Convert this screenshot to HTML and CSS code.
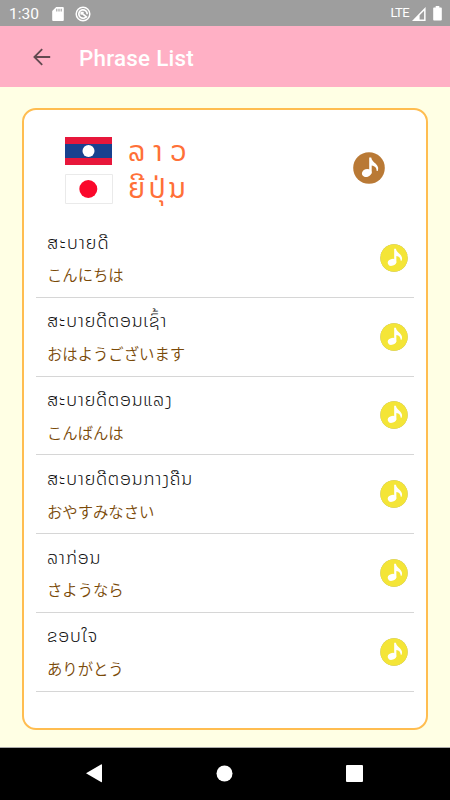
FILE: index.html
```
<!DOCTYPE html>
<html lang="lo">
<head>
<meta charset="utf-8">
<title>Phrase List</title>
<link rel="stylesheet" href="styles.css">
</head>
<body>
<svg class="defs" width="0" height="0" aria-hidden="true">
  <symbol id="note" viewBox="0 0 32 32">
    <ellipse cx="13.7" cy="21" rx="4.9" ry="3.9" transform="rotate(-18 13.7 21)"/>
    <path d="M16.2 5.4h2c.5 3.2 2.4 4.1 4.6 6.4 2.6 2.7 2.9 4.6 1.9 7.2h-1c-.2-3.2-1.5-4.7-5-5.4v7.8h-2.5z"/>
  </symbol>
</svg>
<div class="screen">
  <header class="status">
    <span class="time">1:30</span>
    <svg class="sd" width="12" height="14" viewBox="0 0 12 14"><path fill="#fff" d="M4.2 0H10.8Q11.8 0 11.8 1V13Q11.8 14 10.8 14H1.2Q.2 14 .2 13V4z"/><path stroke="#9e9e9e" stroke-width="1.1" d="M4.8 1.8v2.6M7 1.8v2.6M9.2 1.8v2.6"/></svg>
    <svg class="ring" width="16" height="16" viewBox="0 0 16 16" fill="none" stroke="#fff"><circle cx="8" cy="8" r="6.8" stroke-width="1.5"/><path stroke-width="1.7" d="M10.8 11.2A4.2 4.2 0 1 1 12.2 8.3M6 6.5l6 4.8"/><path stroke-width="1.4" d="M6.2 8.8V6.5h2.5"/></svg>
    <span class="lte">LTE</span>
    <svg class="signal" width="14" height="14" viewBox="0 0 14 14"><path fill="#fff" fill-rule="evenodd" d="M0 14L13.6 0V14zM7.6 8.3V12.5H12.1V3.8z"/></svg>
    <svg class="battery" width="9" height="15" viewBox="0 0 9 15"><path fill="#fff" d="M2.7 0h3.6v1.4H8Q8.8 1.4 8.8 2.2V13.8Q8.8 14.6 8 14.6H1Q.2 14.6 .2 13.8V2.2Q.2 1.4 1 1.4h1.7z"/></svg>
  </header>
  <nav class="appbar">
    <svg class="back" width="18" height="18" viewBox="0 0 18 18" fill="none" stroke="#624950" stroke-width="1.8"><path d="M17.2 9H1.5M9.2 1.2L1.4 9l7.8 7.8"/></svg>
    <h1>Phrase List</h1>
  </nav>
  <main class="content">
    <section class="card">
      <div class="languages">
        <div class="names">
          <div class="language"><svg width="49" height="28" viewBox="0 0 49 28"><path fill="#e7173b" d="M0 0h47v28H0z"/><path fill="#18418f" d="M0 7h47v14H0z"/><circle cx="23.5" cy="14" r="6" fill="#fff"/></svg><span class="n1">ລາວ</span></div>
          <div class="language second"><svg width="49" height="30" viewBox="0 0 49 30"><path fill="#fff" stroke="#eaeaea" d="M.5.5h47v29H.5z"/><circle cx="23.3" cy="15" r="9" fill="#fa082b"/></svg><span class="n2">ຍີປຸ່ນ</span></div>
        </div>
        <svg class="play brown" viewBox="0 0 32 32"><circle cx="16" cy="16" r="15.8" fill="#b97935"/><use href="#note" fill="#fff"/></svg>
      </div>
      <ul class="phrases">
        <li><div><p class="lao p1">ສະບາຍດີ</p><p class="ja">こんにちは</p></div><svg class="play" viewBox="0 0 32 32"><circle cx="16" cy="16" r="15.6" fill="#f4e537"/><use href="#note" fill="#fff"/></svg></li>
        <li><div><p class="lao p2">ສະບາຍດີຕອນເຊົ້າ</p><p class="ja">おはようございます</p></div><svg class="play" viewBox="0 0 32 32"><circle cx="16" cy="16" r="15.6" fill="#f4e537"/><use href="#note" fill="#fff"/></svg></li>
        <li><div><p class="lao p3">ສະບາຍດີຕອນແລງ</p><p class="ja">こんばんは</p></div><svg class="play" viewBox="0 0 32 32"><circle cx="16" cy="16" r="15.6" fill="#f4e537"/><use href="#note" fill="#fff"/></svg></li>
        <li><div><p class="lao p4">ສະບາຍດີຕອນກາງຄືນ</p><p class="ja">おやすみなさい</p></div><svg class="play" viewBox="0 0 32 32"><circle cx="16" cy="16" r="15.6" fill="#f4e537"/><use href="#note" fill="#fff"/></svg></li>
        <li><div><p class="lao p5">ລາກ່ອນ</p><p class="ja">さようなら</p></div><svg class="play" viewBox="0 0 32 32"><circle cx="16" cy="16" r="15.6" fill="#f4e537"/><use href="#note" fill="#fff"/></svg></li>
        <li><div><p class="lao p6">ຂອບໃຈ</p><p class="ja">ありがとう</p></div><svg class="play" viewBox="0 0 32 32"><circle cx="16" cy="16" r="15.6" fill="#f4e537"/><use href="#note" fill="#fff"/></svg></li>
      </ul>
    </section>
  </main>
  <footer class="navbar">
    <svg width="17" height="19" viewBox="0 0 17 19"><path fill="#fff" d="M0 9.3L15 .5Q16 0 16 1V17.6Q16 18.6 15 18z"/></svg>
    <svg width="17" height="17" viewBox="0 0 17 17"><circle cx="8.5" cy="8.5" r="8" fill="#fff"/></svg>
    <svg width="17" height="17" viewBox="0 0 17 17"><rect width="17" height="17" rx="1" fill="#fff"/></svg>
  </footer>
</div>
</body>
</html>
```
FILE: styles.css
```
* { box-sizing: border-box; margin: 0; padding: 0; }
body { font-family: Roboto, "Noto Sans CJK JP", sans-serif; }
svg { display: block; flex: none; }
.defs { position: absolute; }
.screen { width: 450px; height: 800px; display: flex; flex-direction: column; background: #ffffe4; overflow: hidden; }
.status { height: 26px; flex: none; background: #9e9e9e; color: #fff; display: flex; align-items: center; padding: 1px 8px 0 9px; }
.time { width: 43px; font-size: 15.5px; line-height: 26px; font-weight: 400; }
.ring { margin-left: 11px; }
.lte { margin-left: auto; font-size: 13px; line-height: 22px; letter-spacing: -0.6px; padding-bottom: 2px; }
.signal { margin-left: 3px; }
.battery { margin-left: 7px; }
.appbar { height: 61px; flex: none; background: #ffb0c5; display: flex; align-items: center; padding-left: 33px; }
.appbar h1 { margin-left: 28px; font-size: 22.4px; line-height: 28px; font-weight: 500; color: #fff; letter-spacing: 0.25px; padding-top: 2px; }
.content { flex: 1; padding: 21px 22px 17px; }
.card { height: 622px; background: #fff; border: 2px solid #ffbd50; border-radius: 14px; padding: 0 12px; }
.languages { height: 109px; padding: 27px 29px 0 29px; display: flex; justify-content: space-between; }
.language { display: flex; height: 28px; align-items: center; }
.language.second { height: 30px; margin-top: 9px; }
.language span { font-family: "Noto Sans Lao", "DejaVu Sans", sans-serif; color: #ff7038; font-size: 28px; line-height: 28px; margin-left: 14px; white-space: nowrap; }
.language .n1 { letter-spacing: 8px; padding-bottom: 1px; }
.language .n2 { letter-spacing: 3.2px; padding-bottom: 2px; }
.play { width: 28px; height: 28px; filter: drop-shadow(0.5px 0.7px 0.4px #aaa87d); }
.play.brown { width: 32px; height: 32px; margin-top: 15px; filter: none; }
.phrases { list-style: none; }
.phrases li { height: 78.75px; border-bottom: 1px solid #d6d6d6; display: flex; justify-content: space-between; padding: 9.7px 6px 0 11px; }
.lao { font-family: "Noto Sans Lao", "DejaVu Sans", sans-serif; font-weight: 300; font-size: 18px; line-height: 28px; color: #111; white-space: nowrap; letter-spacing: 0.8px; }
.p1 { letter-spacing: 1.1px; }
.ja { font-family: "Noto Sans CJK JP", sans-serif; font-weight: 350; font-size: 15.35px; line-height: 24px; margin-top: 5.6px; color: #7a4a08; }
.phrases .play { margin-top: 15.3px; }
.navbar { height: 53px; flex: none; background: #000; border-top: 1px solid #aaa; display: flex; justify-content: space-between; align-items: center; padding: 0 87px 1px 86px; }
```
